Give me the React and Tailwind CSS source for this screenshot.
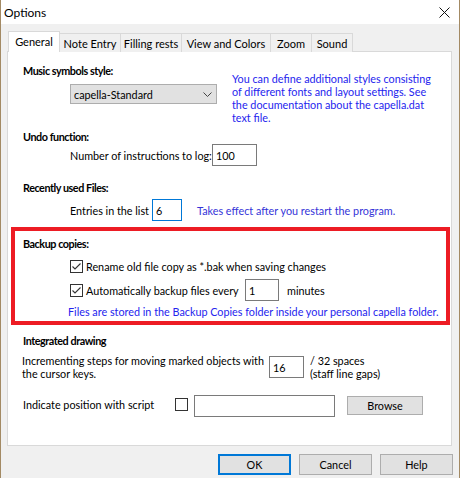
import React from "react";

function Check({ checked }) {
  return (
    <div className="w-[13px] h-[13px] border border-[#333333] bg-white shrink-0 flex items-center justify-center">
      {checked && (
        <svg width="11" height="11" viewBox="0 0 11 11">
          <path d="M1.5 5.5 L4 8 L9.5 2.5" fill="none" stroke="#333333" strokeWidth="1.1" />
        </svg>
      )}
    </div>
  );
}

function Tab({ label, active, w }) {
  if (active) {
    return (
      <div className={`relative z-10 h-[21px] bg-white border border-b-0 border-[#d9d9d9] flex items-start justify-center pt-[2px] shrink-0 ${w}`}>
        {label}
      </div>
    );
  }
  return (
    <div className={`h-[19px] bg-[#f0f0f0] border-t border-r border-[#d9d9d9] flex items-start justify-center pt-[2px] shrink-0 ${w}`}>
      {label}
    </div>
  );
}

function Button({ children, primary }) {
  return (
    <div
      className={`w-[73px] h-[21px] bg-[#e1e1e1] flex items-center justify-center ${
        primary ? "border-2 border-[#0078d7]" : "border border-[#adadad]"
      }`}
    >
      {children}
    </div>
  );
}

export default function App() {
  return (
    <div className="w-[460px] h-[478px] bg-[#f0f0f0] border-x border-[#a38a64] flex flex-col font-['Lato',sans-serif] text-[10.8px] leading-[15px] text-black">
      <div className="h-[24px] bg-white flex items-center justify-between pl-[3px] pr-[9px] shrink-0">
        <span className="text-[12px]">Options</span>
        <svg width="11" height="11" viewBox="0 0 11 11">
          <path d="M0.5 0.5 L10.5 10.5 M10.5 0.5 L0.5 10.5" stroke="#111111" strokeWidth="1" />
        </svg>
      </div>
      <div className="pl-[6px] pt-[7px]">
        <div className="flex items-end h-[21px] pl-[1px] text-[11px]">
          <Tab label="General" active w="w-[52px]" />
          <Tab label="Note Entry" w="w-[61px]" />
          <Tab label="Filling rests" w="w-[61px]" />
          <Tab label="View and Colors" w="w-[89px]" />
          <Tab label="Zoom" w="w-[41px]" />
          <Tab label="Sound" w="w-[41px]" />
        </div>
        <div className="-mt-px w-[445px] h-[395px] bg-white border border-[#d9d9d9] flex flex-col">
          <div className="flex pl-[15px] pt-[11px]">
            <div className="w-[209px] shrink-0">
              <div className="font-bold tracking-[-0.45px]">Music symbols style:</div>
              <div className="ml-[47px] mt-[6px] w-[147px] h-[20px] bg-[#e1e1e1] border border-[#adadad] flex items-center justify-between pl-[3px] pr-[4px]">
                <span>capella-Standard</span>
                <svg width="9" height="5" viewBox="0 0 9 5">
                  <path d="M0.5 0.5 L4.5 4.5 L8.5 0.5" fill="none" stroke="#444444" strokeWidth="1" />
                </svg>
              </div>
            </div>
            <div className="mt-[9px] leading-[13px] text-[#2424ee] whitespace-nowrap">
              You can define additional styles consisting
              <br />
              of different fonts and layout settings. See
              <br />
              the documentation about the capella.dat
              <br />
              text file.
            </div>
          </div>

          <div className="pl-[15px] mt-[5px] font-bold tracking-[-0.45px]">Undo function:</div>
          <div className="pl-[62px] flex items-center h-[22px]">
            <span className="w-[142px] shrink-0 whitespace-nowrap">Number of instructions to log:</span>
            <div className="w-[45px] shrink-0 h-[22px] border border-[#7a7a7a] pl-[3px] flex items-center">100</div>
          </div>

          <div className="pl-[15px] mt-[14px] font-bold tracking-[-0.45px]">Recently used Files:</div>
          <div className="pl-[62px] mt-[4px] flex items-center h-[22px]">
            <span className="w-[82px] shrink-0 whitespace-nowrap">Entries in the list</span>
            <div className="w-[30px] shrink-0 h-[22px] border border-[#0078d7] pl-[3px] flex items-center">6</div>
            <span className="ml-[15px] text-[#3434d8] whitespace-nowrap">Takes effect after you restart the program.</span>
          </div>

          <div className="ml-[3px] mt-[6px] w-[439px] h-[98px] border-4 border-[#ed1c24] pl-[8px] flex flex-col">
            <div className="mt-[5px] font-bold tracking-[-0.45px]">Backup copies:</div>
            <div className="ml-[47px] mt-[8px] h-[15px] flex items-center">
              <Check checked />
              <span className="ml-[3px] whitespace-nowrap">Rename old file copy as *.bak when saving changes</span>
            </div>
            <div className="ml-[47px] mt-[5px] h-[22px] flex items-center">
              <Check checked />
              <span className="ml-[3px] w-[159px] shrink-0 whitespace-nowrap">Automatically backup files every</span>
              <div className="w-[34px] shrink-0 h-[22px] border border-[#7a7a7a] pl-[3px] flex items-center">1</div>
              <span className="ml-[8px]">minutes</span>
            </div>
            <div className="ml-[45px] mt-[3px] text-[#2424ee] whitespace-nowrap">
              Files are stored in the Backup Copies folder inside your personal capella folder.
            </div>
          </div>

          <div className="pl-[15px] mt-[8px] font-bold tracking-[-0.45px]">Integrated drawing</div>
          <div className="pl-[14px] mt-[6px] flex items-start">
            <div className="w-[247px] shrink-0 leading-[13px] whitespace-nowrap">
              Incrementing steps for moving marked objects with
              <br />
              the cursor keys.
            </div>
            <div className="mt-[2px] w-[35px] shrink-0 h-[22px] border border-[#7a7a7a] pl-[3px] flex items-center">16</div>
            <div className="ml-[6px] leading-[13px] whitespace-nowrap">
              / 32 spaces
              <br />
              (staff line gaps)
            </div>
          </div>
          <div className="pl-[15px] mt-[15px] flex items-start">
            <span className="mt-[2px] w-[152px] shrink-0 whitespace-nowrap">Indicate position with script</span>
            <div className="mt-[3px]">
              <Check />
            </div>
            <div className="ml-[6px] w-[141px] shrink-0 h-[22px] border border-[#7a7a7a]"></div>
            <div className="ml-[12px] mt-[1px] w-[76px] shrink-0 h-[19px] bg-[#e1e1e1] border border-[#adadad] flex items-center justify-center">
              Browse
            </div>
          </div>
        </div>
      </div>
      <div className="mt-[8px] flex justify-end gap-[8px] pr-[6px]">
        <Button primary>OK</Button>
        <Button>Cancel</Button>
        <Button>Help</Button>
      </div>
    </div>
  );
}
